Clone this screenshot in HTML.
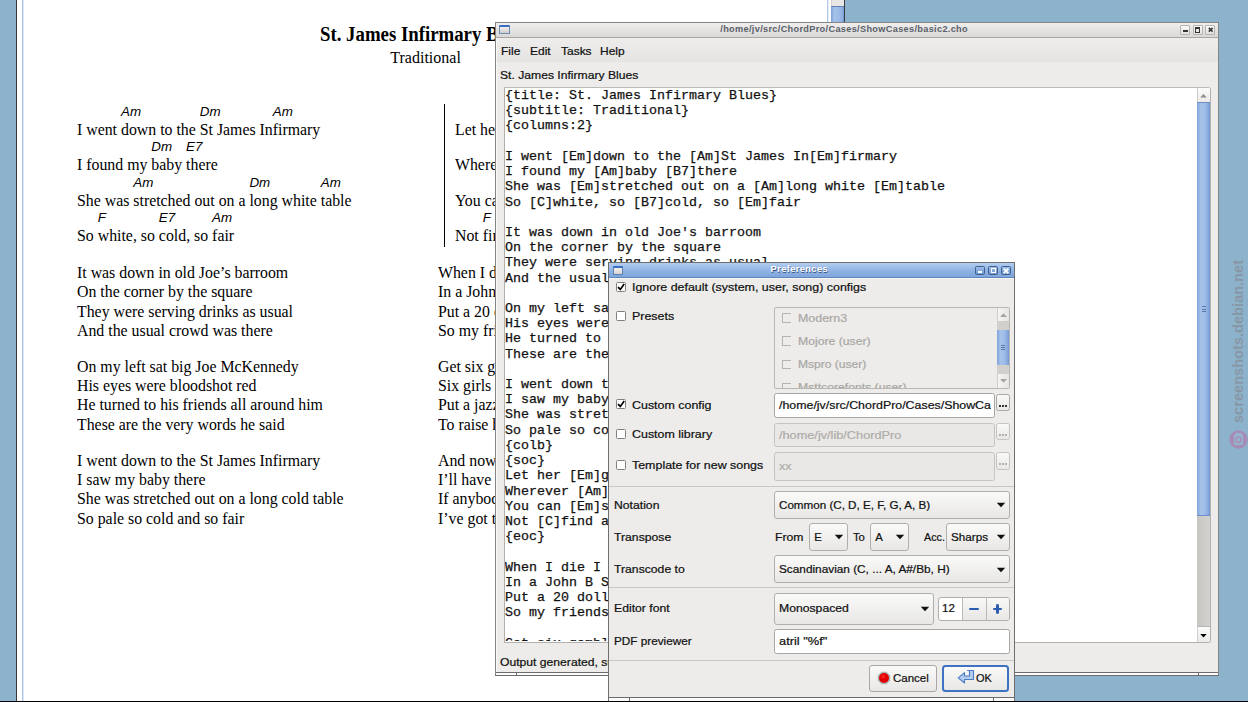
<!DOCTYPE html>
<html><head><meta charset="utf-8"><title>ChordPro</title>
<style>
html,body{margin:0;padding:0}
body{width:1248px;height:702px;overflow:hidden;position:relative;background:#8cb3cb;font-family:"Liberation Sans",sans-serif}
.t{position:absolute;white-space:pre}
.u{-webkit-text-stroke:0.22px currentColor}
.m{-webkit-text-stroke:0.25px currentColor}
.b{position:absolute}
.ch{position:relative}
.ch i{position:absolute;left:0;top:-16.9px;font-family:"Liberation Sans",sans-serif;font-size:13.5px;font-style:italic;line-height:16px;white-space:pre}
</style></head><body>
<div class="b" style="left:16px;top:0px;width:1px;height:701px;background:#3b3533"></div>
<div class="b" style="left:17px;top:0px;width:814px;height:701px;background:#fff"></div>
<div class="b" style="left:22px;top:0px;width:1px;height:701px;background:#adc5e8"></div>
<div class="b" style="left:23px;top:0px;width:1px;height:701px;background:#dce7f6"></div>
<div class="b" style="left:827px;top:0px;width:1px;height:701px;background:#b3c9ea"></div>
<div class="b" style="left:828px;top:0px;width:1px;height:701px;background:#e6eef9"></div>
<div class="b" style="left:831px;top:0px;width:13px;height:6px;background:#e8e6e3;box-sizing:border-box;border-left:1px solid #d6d3cf"></div>
<div class="b" style="left:831px;top:6px;width:13px;height:1px;background:#5f82bb"></div>
<div class="b" style="left:831px;top:7px;width:13px;height:694px;background:linear-gradient(90deg,#7aa0d8,#a6c2ea 25%,#9dbbe6 60%,#92b3e3 85%,#6f95d2)"></div>
<div class="b" style="left:844px;top:0px;width:1px;height:701px;background:#3a3d40"></div>
<div class="t " style="left:320px;top:21.75px;font-size:20px;line-height:24.0px;font-family:'Liberation Serif', serif;color:#000;font-weight:bold;font-style:normal;transform:scaleX(0.94);transform-origin:0 0;">St. James Infirmary Blues</div>
<div class="t " style="left:390.3px;top:47.60px;font-size:16px;line-height:19.2px;font-family:'Liberation Serif', serif;color:#000;font-weight:normal;font-style:normal;">Traditional</div>
<div class="t " style="left:77px;top:119.70px;font-size:16px;line-height:19.2px;font-family:'Liberation Serif', serif;color:#000;font-weight:normal;font-style:normal;transform:scaleX(0.99);transform-origin:0 0;">I went <span class="ch"><i>Am</i></span>down to the <span class="ch"><i>Dm</i></span>St James In<span class="ch"><i>Am</i></span>firmary</div>
<div class="t " style="left:77px;top:155.20px;font-size:16px;line-height:19.2px;font-family:'Liberation Serif', serif;color:#000;font-weight:normal;font-style:normal;transform:scaleX(0.99);transform-origin:0 0;">I found my <span class="ch"><i>Dm</i></span>baby <span class="ch"><i>E7</i></span>there</div>
<div class="t " style="left:77px;top:190.70px;font-size:16px;line-height:19.2px;font-family:'Liberation Serif', serif;color:#000;font-weight:normal;font-style:normal;transform:scaleX(0.99);transform-origin:0 0;">She was <span class="ch"><i>Am</i></span>stretched out on a <span class="ch"><i>Dm</i></span>long white <span class="ch"><i>Am</i></span>table</div>
<div class="t " style="left:77px;top:226.20px;font-size:16px;line-height:19.2px;font-family:'Liberation Serif', serif;color:#000;font-weight:normal;font-style:normal;transform:scaleX(0.99);transform-origin:0 0;">So <span class="ch"><i>F</i></span>white, so <span class="ch"><i>E7</i></span>cold, so <span class="ch"><i>Am</i></span>fair</div>
<div class="t " style="left:77px;top:262.70px;font-size:16px;line-height:19.2px;font-family:'Liberation Serif', serif;color:#000;font-weight:normal;font-style:normal;transform:scaleX(0.99);transform-origin:0 0;">It was down in old Joe’s barroom</div>
<div class="t " style="left:77px;top:282.10px;font-size:16px;line-height:19.2px;font-family:'Liberation Serif', serif;color:#000;font-weight:normal;font-style:normal;transform:scaleX(0.99);transform-origin:0 0;">On the corner by the square</div>
<div class="t " style="left:77px;top:301.50px;font-size:16px;line-height:19.2px;font-family:'Liberation Serif', serif;color:#000;font-weight:normal;font-style:normal;transform:scaleX(0.99);transform-origin:0 0;">They were serving drinks as usual</div>
<div class="t " style="left:77px;top:320.90px;font-size:16px;line-height:19.2px;font-family:'Liberation Serif', serif;color:#000;font-weight:normal;font-style:normal;transform:scaleX(0.99);transform-origin:0 0;">And the usual crowd was there</div>
<div class="t " style="left:77px;top:356.60px;font-size:16px;line-height:19.2px;font-family:'Liberation Serif', serif;color:#000;font-weight:normal;font-style:normal;transform:scaleX(0.99);transform-origin:0 0;">On my left sat big Joe McKennedy</div>
<div class="t " style="left:77px;top:376.00px;font-size:16px;line-height:19.2px;font-family:'Liberation Serif', serif;color:#000;font-weight:normal;font-style:normal;transform:scaleX(0.99);transform-origin:0 0;">His eyes were bloodshot red</div>
<div class="t " style="left:77px;top:395.40px;font-size:16px;line-height:19.2px;font-family:'Liberation Serif', serif;color:#000;font-weight:normal;font-style:normal;transform:scaleX(0.99);transform-origin:0 0;">He turned to his friends all around him</div>
<div class="t " style="left:77px;top:414.80px;font-size:16px;line-height:19.2px;font-family:'Liberation Serif', serif;color:#000;font-weight:normal;font-style:normal;transform:scaleX(0.99);transform-origin:0 0;">These are the very words he said</div>
<div class="t " style="left:77px;top:450.50px;font-size:16px;line-height:19.2px;font-family:'Liberation Serif', serif;color:#000;font-weight:normal;font-style:normal;transform:scaleX(0.99);transform-origin:0 0;">I went down to the St James Infirmary</div>
<div class="t " style="left:77px;top:469.90px;font-size:16px;line-height:19.2px;font-family:'Liberation Serif', serif;color:#000;font-weight:normal;font-style:normal;transform:scaleX(0.99);transform-origin:0 0;">I saw my baby there</div>
<div class="t " style="left:77px;top:489.30px;font-size:16px;line-height:19.2px;font-family:'Liberation Serif', serif;color:#000;font-weight:normal;font-style:normal;transform:scaleX(0.99);transform-origin:0 0;">She was stretched out on a long cold table</div>
<div class="t " style="left:77px;top:508.70px;font-size:16px;line-height:19.2px;font-family:'Liberation Serif', serif;color:#000;font-weight:normal;font-style:normal;transform:scaleX(0.99);transform-origin:0 0;">So pale so cold and so fair</div>
<div class="t " style="left:455.2px;top:119.70px;font-size:16px;line-height:19.2px;font-family:'Liberation Serif', serif;color:#000;font-weight:normal;font-style:normal;transform:scaleX(0.99);transform-origin:0 0;">Let her <span class="ch"><i>Am</i></span>go, let her go, God bless her</div>
<div class="t " style="left:455.2px;top:155.20px;font-size:16px;line-height:19.2px;font-family:'Liberation Serif', serif;color:#000;font-weight:normal;font-style:normal;transform:scaleX(0.99);transform-origin:0 0;">Wherever <span class="ch"><i>Dm</i></span>she may be</div>
<div class="t " style="left:455.2px;top:190.70px;font-size:16px;line-height:19.2px;font-family:'Liberation Serif', serif;color:#000;font-weight:normal;font-style:normal;transform:scaleX(0.99);transform-origin:0 0;">You can <span class="ch"><i>Am</i></span>search this wide world over</div>
<div class="t " style="left:455.2px;top:226.20px;font-size:16px;line-height:19.2px;font-family:'Liberation Serif', serif;color:#000;font-weight:normal;font-style:normal;transform:scaleX(0.99);transform-origin:0 0;">Not <span class="ch"><i>F</i></span>find another man like me</div>
<div class="b" style="left:444px;top:104px;width:1.3px;height:143px;background:#000"></div>
<div class="t " style="left:438.3px;top:262.70px;font-size:16px;line-height:19.2px;font-family:'Liberation Serif', serif;color:#000;font-weight:normal;font-style:normal;transform:scaleX(0.99);transform-origin:0 0;">When I die I want you to bury me</div>
<div class="t " style="left:438.3px;top:282.10px;font-size:16px;line-height:19.2px;font-family:'Liberation Serif', serif;color:#000;font-weight:normal;font-style:normal;transform:scaleX(0.99);transform-origin:0 0;">In a John B Stetson hat</div>
<div class="t " style="left:438.3px;top:301.50px;font-size:16px;line-height:19.2px;font-family:'Liberation Serif', serif;color:#000;font-weight:normal;font-style:normal;transform:scaleX(0.99);transform-origin:0 0;">Put a 20 dollar gold piece on my watch chain</div>
<div class="t " style="left:438.3px;top:320.90px;font-size:16px;line-height:19.2px;font-family:'Liberation Serif', serif;color:#000;font-weight:normal;font-style:normal;transform:scaleX(0.99);transform-origin:0 0;">So my friends know I died standing pat</div>
<div class="t " style="left:438.3px;top:356.60px;font-size:16px;line-height:19.2px;font-family:'Liberation Serif', serif;color:#000;font-weight:normal;font-style:normal;transform:scaleX(0.99);transform-origin:0 0;">Get six gamblers to carry my coffin</div>
<div class="t " style="left:438.3px;top:376.00px;font-size:16px;line-height:19.2px;font-family:'Liberation Serif', serif;color:#000;font-weight:normal;font-style:normal;transform:scaleX(0.99);transform-origin:0 0;">Six girls to sing me a song</div>
<div class="t " style="left:438.3px;top:395.40px;font-size:16px;line-height:19.2px;font-family:'Liberation Serif', serif;color:#000;font-weight:normal;font-style:normal;transform:scaleX(0.99);transform-origin:0 0;">Put a jazz band on my tail gate</div>
<div class="t " style="left:438.3px;top:414.80px;font-size:16px;line-height:19.2px;font-family:'Liberation Serif', serif;color:#000;font-weight:normal;font-style:normal;transform:scaleX(0.99);transform-origin:0 0;">To raise hell as we go along</div>
<div class="t " style="left:438.3px;top:450.50px;font-size:16px;line-height:19.2px;font-family:'Liberation Serif', serif;color:#000;font-weight:normal;font-style:normal;transform:scaleX(0.99);transform-origin:0 0;">And now that’s the end of my story</div>
<div class="t " style="left:438.3px;top:469.90px;font-size:16px;line-height:19.2px;font-family:'Liberation Serif', serif;color:#000;font-weight:normal;font-style:normal;transform:scaleX(0.99);transform-origin:0 0;">I’ll have another round of booze</div>
<div class="t " style="left:438.3px;top:489.30px;font-size:16px;line-height:19.2px;font-family:'Liberation Serif', serif;color:#000;font-weight:normal;font-style:normal;transform:scaleX(0.99);transform-origin:0 0;">If anybody happens to ask you</div>
<div class="t " style="left:438.3px;top:508.70px;font-size:16px;line-height:19.2px;font-family:'Liberation Serif', serif;color:#000;font-weight:normal;font-style:normal;transform:scaleX(0.99);transform-origin:0 0;">I’ve got the St James Infirmary blues</div>
<div class="b" style="left:495px;top:22px;width:724px;height:654px;background:#edecea;box-sizing:border-box;border:1px solid #858585;overflow:hidden"></div>
<div class="b" style="left:496px;top:23px;width:722px;height:14px;background:linear-gradient(#f0efee,#d9d8d6)"></div>
<div class="b" style="left:496px;top:37px;width:722px;height:1px;background:#a8a7a5"></div>
<div class="b" style="left:499.3px;top:25.3px;width:10.7px;height:9.2px;background:linear-gradient(#f4f1ee,#d0cdc9);box-sizing:border-box;border:1px solid #6f8bb5;border-top:2px solid #3a6cc0;border-radius:1px"></div>
<div class="t " style="left:720.3px;top:23.89px;font-size:9.2px;line-height:11.04px;font-family:'Liberation Sans', sans-serif;color:#5a606a;font-weight:bold;font-style:normal;letter-spacing:0.32px;">/home/jv/src/ChordPro/Cases/ShowCases/basic2.cho</div>
<div class="b" style="left:1180px;top:25px;width:10px;height:10px;box-sizing:border-box;border:1px solid #b4b3b0;border-radius:1px;background:linear-gradient(#fbfbfa,#e2e1df)"></div>
<div class="b" style="left:1192.5px;top:25px;width:10px;height:10px;box-sizing:border-box;border:1px solid #b4b3b0;border-radius:1px;background:linear-gradient(#fbfbfa,#e2e1df)"></div>
<div class="b" style="left:1205px;top:25px;width:10px;height:10px;box-sizing:border-box;border:1px solid #b4b3b0;border-radius:1px;background:linear-gradient(#fbfbfa,#e2e1df)"></div>
<div class="b" style="left:1182.5px;top:30.2px;width:5px;height:1.5px;background:#333"></div>
<div class="b" style="left:1194.7px;top:27px;width:5.7px;height:5.5px;box-sizing:border-box;border:1px solid #333;border-top-width:2px"></div>
<svg class="b" style="left:1207.6px;top:27.2px" width="6" height="6"><path d="M0.8 0.8L4.6 4.6M4.6 0.8L0.8 4.6" stroke="#3c3c3c" stroke-width="1.7"/></svg>
<div class="b" style="left:496px;top:38px;width:722px;height:24px;background:linear-gradient(#eeedeb,#e5e4e2)"></div>
<div class="b" style="left:496px;top:38px;width:1px;height:634px;background:#f9f9f8"></div>
<div class="t u" style="left:501.4px;top:44.50px;font-size:11.3px;line-height:13.56px;font-family:'Liberation Sans', sans-serif;color:#111;font-weight:normal;font-style:normal;transform:scaleX(1.06);transform-origin:0 0;">File</div>
<div class="t u" style="left:530.4px;top:44.50px;font-size:11.3px;line-height:13.56px;font-family:'Liberation Sans', sans-serif;color:#111;font-weight:normal;font-style:normal;transform:scaleX(1.06);transform-origin:0 0;">Edit</div>
<div class="t u" style="left:560.9px;top:44.50px;font-size:11.3px;line-height:13.56px;font-family:'Liberation Sans', sans-serif;color:#111;font-weight:normal;font-style:normal;transform:scaleX(1.06);transform-origin:0 0;">Tasks</div>
<div class="t u" style="left:600.0px;top:44.50px;font-size:11.3px;line-height:13.56px;font-family:'Liberation Sans', sans-serif;color:#111;font-weight:normal;font-style:normal;transform:scaleX(1.06);transform-origin:0 0;">Help</div>
<div class="t u" style="left:499.8px;top:68.50px;font-size:11.3px;line-height:13.56px;font-family:'Liberation Sans', sans-serif;color:#111;font-weight:normal;font-style:normal;transform:scaleX(1.075);transform-origin:0 0;">St. James Infirmary Blues</div>
<div class="b" style="left:504px;top:87px;width:707px;height:556px;background:#fff;box-sizing:border-box;border:1px solid #b2b0ad;border-top-color:#bdbbb8;border-radius:0 3px 3px 0"></div>
<div class="b" style="left:505px;top:88px;width:691px;height:553px;overflow:hidden"><div class="t m" style="left:0.0px;top:0.05px;font-size:13.33px;line-height:15.996px;font-family:'Liberation Mono', monospace;color:#111;font-weight:normal;font-style:normal;">{title: St. James Infirmary Blues}</div><div class="t m" style="left:0.0px;top:15.26px;font-size:13.33px;line-height:15.996px;font-family:'Liberation Mono', monospace;color:#111;font-weight:normal;font-style:normal;">{subtitle: Traditional}</div><div class="t m" style="left:0.0px;top:30.47px;font-size:13.33px;line-height:15.996px;font-family:'Liberation Mono', monospace;color:#111;font-weight:normal;font-style:normal;">{columns:2}</div><div class="t m" style="left:0.0px;top:45.68px;font-size:13.33px;line-height:15.996px;font-family:'Liberation Mono', monospace;color:#111;font-weight:normal;font-style:normal;"></div><div class="t m" style="left:0.0px;top:60.89px;font-size:13.33px;line-height:15.996px;font-family:'Liberation Mono', monospace;color:#111;font-weight:normal;font-style:normal;">I went [Em]down to the [Am]St James In[Em]firmary</div><div class="t m" style="left:0.0px;top:76.10px;font-size:13.33px;line-height:15.996px;font-family:'Liberation Mono', monospace;color:#111;font-weight:normal;font-style:normal;">I found my [Am]baby [B7]there</div><div class="t m" style="left:0.0px;top:91.31px;font-size:13.33px;line-height:15.996px;font-family:'Liberation Mono', monospace;color:#111;font-weight:normal;font-style:normal;">She was [Em]stretched out on a [Am]long white [Em]table</div><div class="t m" style="left:0.0px;top:106.52px;font-size:13.33px;line-height:15.996px;font-family:'Liberation Mono', monospace;color:#111;font-weight:normal;font-style:normal;">So [C]white, so [B7]cold, so [Em]fair</div><div class="t m" style="left:0.0px;top:121.73px;font-size:13.33px;line-height:15.996px;font-family:'Liberation Mono', monospace;color:#111;font-weight:normal;font-style:normal;"></div><div class="t m" style="left:0.0px;top:136.94px;font-size:13.33px;line-height:15.996px;font-family:'Liberation Mono', monospace;color:#111;font-weight:normal;font-style:normal;">It was down in old Joe&#x27;s barroom</div><div class="t m" style="left:0.0px;top:152.15px;font-size:13.33px;line-height:15.996px;font-family:'Liberation Mono', monospace;color:#111;font-weight:normal;font-style:normal;">On the corner by the square</div><div class="t m" style="left:0.0px;top:167.36px;font-size:13.33px;line-height:15.996px;font-family:'Liberation Mono', monospace;color:#111;font-weight:normal;font-style:normal;">They were serving drinks as usual</div><div class="t m" style="left:0.0px;top:182.57px;font-size:13.33px;line-height:15.996px;font-family:'Liberation Mono', monospace;color:#111;font-weight:normal;font-style:normal;">And the usual crowd was there</div><div class="t m" style="left:0.0px;top:197.78px;font-size:13.33px;line-height:15.996px;font-family:'Liberation Mono', monospace;color:#111;font-weight:normal;font-style:normal;"></div><div class="t m" style="left:0.0px;top:212.99px;font-size:13.33px;line-height:15.996px;font-family:'Liberation Mono', monospace;color:#111;font-weight:normal;font-style:normal;">On my left sat big Joe McKennedy</div><div class="t m" style="left:0.0px;top:228.20px;font-size:13.33px;line-height:15.996px;font-family:'Liberation Mono', monospace;color:#111;font-weight:normal;font-style:normal;">His eyes were bloodshot red</div><div class="t m" style="left:0.0px;top:243.41px;font-size:13.33px;line-height:15.996px;font-family:'Liberation Mono', monospace;color:#111;font-weight:normal;font-style:normal;">He turned to his friends all around him</div><div class="t m" style="left:0.0px;top:258.62px;font-size:13.33px;line-height:15.996px;font-family:'Liberation Mono', monospace;color:#111;font-weight:normal;font-style:normal;">These are the very words he said</div><div class="t m" style="left:0.0px;top:273.83px;font-size:13.33px;line-height:15.996px;font-family:'Liberation Mono', monospace;color:#111;font-weight:normal;font-style:normal;"></div><div class="t m" style="left:0.0px;top:289.04px;font-size:13.33px;line-height:15.996px;font-family:'Liberation Mono', monospace;color:#111;font-weight:normal;font-style:normal;">I went down to the St James Infirmary</div><div class="t m" style="left:0.0px;top:304.25px;font-size:13.33px;line-height:15.996px;font-family:'Liberation Mono', monospace;color:#111;font-weight:normal;font-style:normal;">I saw my baby there</div><div class="t m" style="left:0.0px;top:319.46px;font-size:13.33px;line-height:15.996px;font-family:'Liberation Mono', monospace;color:#111;font-weight:normal;font-style:normal;">She was stretched out on a long cold table</div><div class="t m" style="left:0.0px;top:334.67px;font-size:13.33px;line-height:15.996px;font-family:'Liberation Mono', monospace;color:#111;font-weight:normal;font-style:normal;">So pale so cold and so fair</div><div class="t m" style="left:0.0px;top:349.88px;font-size:13.33px;line-height:15.996px;font-family:'Liberation Mono', monospace;color:#111;font-weight:normal;font-style:normal;">{colb}</div><div class="t m" style="left:0.0px;top:365.09px;font-size:13.33px;line-height:15.996px;font-family:'Liberation Mono', monospace;color:#111;font-weight:normal;font-style:normal;">{soc}</div><div class="t m" style="left:0.0px;top:380.30px;font-size:13.33px;line-height:15.996px;font-family:'Liberation Mono', monospace;color:#111;font-weight:normal;font-style:normal;">Let her [Em]go, let her go, God bless her</div><div class="t m" style="left:0.0px;top:395.51px;font-size:13.33px;line-height:15.996px;font-family:'Liberation Mono', monospace;color:#111;font-weight:normal;font-style:normal;">Wherever [Am]she may be</div><div class="t m" style="left:0.0px;top:410.72px;font-size:13.33px;line-height:15.996px;font-family:'Liberation Mono', monospace;color:#111;font-weight:normal;font-style:normal;">You can [Em]search this wide world over</div><div class="t m" style="left:0.0px;top:425.93px;font-size:13.33px;line-height:15.996px;font-family:'Liberation Mono', monospace;color:#111;font-weight:normal;font-style:normal;">Not [C]find another man like me</div><div class="t m" style="left:0.0px;top:441.14px;font-size:13.33px;line-height:15.996px;font-family:'Liberation Mono', monospace;color:#111;font-weight:normal;font-style:normal;">{eoc}</div><div class="t m" style="left:0.0px;top:456.35px;font-size:13.33px;line-height:15.996px;font-family:'Liberation Mono', monospace;color:#111;font-weight:normal;font-style:normal;"></div><div class="t m" style="left:0.0px;top:471.56px;font-size:13.33px;line-height:15.996px;font-family:'Liberation Mono', monospace;color:#111;font-weight:normal;font-style:normal;">When I die I want you to bury me</div><div class="t m" style="left:0.0px;top:486.77px;font-size:13.33px;line-height:15.996px;font-family:'Liberation Mono', monospace;color:#111;font-weight:normal;font-style:normal;">In a John B Stetson hat</div><div class="t m" style="left:0.0px;top:501.98px;font-size:13.33px;line-height:15.996px;font-family:'Liberation Mono', monospace;color:#111;font-weight:normal;font-style:normal;">Put a 20 dollar gold piece on my watch chain</div><div class="t m" style="left:0.0px;top:517.19px;font-size:13.33px;line-height:15.996px;font-family:'Liberation Mono', monospace;color:#111;font-weight:normal;font-style:normal;">So my friends know I died standing pat</div><div class="t m" style="left:0.0px;top:532.40px;font-size:13.33px;line-height:15.996px;font-family:'Liberation Mono', monospace;color:#111;font-weight:normal;font-style:normal;"></div><div class="t m" style="left:0.0px;top:547.61px;font-size:13.33px;line-height:15.996px;font-family:'Liberation Mono', monospace;color:#111;font-weight:normal;font-style:normal;">Get six gamblers to carry my coffin</div></div>
<div class="b" style="left:1197px;top:88px;width:13px;height:14px;background:linear-gradient(#fbfbfa,#ecebe9);box-sizing:border-box;border-left:1px solid #cfcecc;border-radius:0 2px 0 0"></div>
<svg class="b" style="left:1199.3px;top:92.5px" width="9" height="6"><path d="M1.3 4.6L7.7 4.6L4.5 1Z" fill="#8f8c89"/></svg>
<div class="b" style="left:1197px;top:102px;width:13px;height:414px;background:linear-gradient(90deg,#7ea3da,#a8c3ea 30%,#a0bde8 60%,#88aade 85%,#6f97d4);box-sizing:border-box;border-top:1px solid #6d8fc8;border-bottom:1px solid #6d8fc8"></div>
<div class="b" style="left:1201.5px;top:306px;width:4px;height:1px;background:#5a78a8"></div>
<div class="b" style="left:1201.5px;top:308.7px;width:4px;height:1px;background:#5a78a8"></div>
<div class="b" style="left:1201.5px;top:311.2px;width:4px;height:1px;background:#5a78a8"></div>
<div class="b" style="left:1197px;top:516px;width:13px;height:110px;background:linear-gradient(90deg,#c7c6c3,#d3d2cf)"></div>
<div class="b" style="left:1197px;top:626px;width:13px;height:16px;background:linear-gradient(#fbfbfa,#ecebe9);box-sizing:border-box;border-left:1px solid #cfcecc;border-top:1px solid #b9b7b4;border-radius:0 0 2px 0"></div>
<svg class="b" style="left:1199.3px;top:632.5px" width="9" height="6"><path d="M1.3 1L7.7 1L4.5 4.6Z" fill="#000"/></svg>
<div class="t u" style="left:499.8px;top:656.10px;font-size:11.3px;line-height:13.56px;font-family:'Liberation Sans', sans-serif;color:#111;font-weight:normal;font-style:normal;transform:scaleX(1.075);transform-origin:0 0;">Output generated, successfully</div>
<div class="b" style="left:496px;top:672px;width:722px;height:1px;background:#6c6c6c"></div>
<div class="b" style="left:496px;top:673px;width:722px;height:2px;background:#fbfbfb"></div>
<div class="b" style="left:495px;top:675px;width:724px;height:1px;background:#6c6c6c"></div>
<div class="b" style="left:516px;top:672px;width:1px;height:4px;background:#6c6c6c"></div>
<div class="b" style="left:1197.5px;top:672px;width:1px;height:4px;background:#6c6c6c"></div>
<div class="b" style="left:608px;top:262px;width:407px;height:439px;background:#edecea;box-sizing:border-box;border:1px solid #6e6e6e;border-bottom:none"></div>
<div class="b" style="left:609px;top:263px;width:405px;height:15px;background:linear-gradient(#b3cdf0,#8db1e2 55%,#7ea4d8)"></div>
<div class="b" style="left:609px;top:277px;width:405px;height:1px;background:#5e86c0"></div>
<div class="b" style="left:612.8px;top:265.8px;width:10.5px;height:9.2px;background:linear-gradient(#f4f1ee,#d6d3cf);box-sizing:border-box;border:1px solid #5b7fb5;border-top:2px solid #3a6cc0;border-radius:1px"></div>
<div class="t " style="left:770.6px;top:264.30px;font-size:9.3px;line-height:11.16px;font-family:'Liberation Sans', sans-serif;color:#ffffff;font-weight:bold;font-style:normal;letter-spacing:0.38px;text-shadow:0.6px 0.7px 0.6px rgba(30,50,90,0.75);">Preferences</div>
<div class="b" style="left:975px;top:265.5px;width:10px;height:9.5px;box-sizing:border-box;border:1px solid #3f5f8e;border-radius:1.5px;background:linear-gradient(#9cbde9,#6e98d2)"></div>
<div class="b" style="left:988px;top:265.5px;width:10px;height:9.5px;box-sizing:border-box;border:1px solid #3f5f8e;border-radius:1.5px;background:linear-gradient(#9cbde9,#6e98d2)"></div>
<div class="b" style="left:1001px;top:265.5px;width:10px;height:9.5px;box-sizing:border-box;border:1px solid #3f5f8e;border-radius:1.5px;background:linear-gradient(#9cbde9,#6e98d2)"></div>
<div class="b" style="left:977.8px;top:271px;width:4.6px;height:1.8px;background:#fff"></div>
<div class="b" style="left:990.6px;top:268px;width:5px;height:4.8px;box-sizing:border-box;border:1.4px solid #fff"></div>
<svg class="b" style="left:1003.3px;top:267.6px" width="6" height="6"><path d="M0.7 0.7L5.3 5.3M5.3 0.7L0.7 5.3" stroke="#fff" stroke-width="1.7"/></svg>
<div class="b" style="left:609px;top:278px;width:405px;height:1px;background:#f8f4ef"></div>
<div class="b" style="left:616px;top:282px;width:10px;height:10px;box-sizing:border-box;border:1px solid #82807d;border-radius:1.5px;background:#fff"></div><svg class="b" style="left:616px;top:282px" width="10" height="10"><path d="M2 5.1L4.3 7.4L8.2 2.1" stroke="#000" stroke-width="1.7" fill="none"/></svg>
<div class="t u" style="left:632.3px;top:281.30px;font-size:11.3px;line-height:13.56px;font-family:'Liberation Sans', sans-serif;color:#111;font-weight:normal;font-style:normal;transform:scaleX(1.1);transform-origin:0 0;">Ignore default (system, user, song) configs</div>
<div class="b" style="left:616px;top:311px;width:10px;height:10px;box-sizing:border-box;border:1px solid #82807d;border-radius:1.5px;background:#fff"></div>
<div class="t u" style="left:632.3px;top:310.10px;font-size:11.3px;line-height:13.56px;font-family:'Liberation Sans', sans-serif;color:#111;font-weight:normal;font-style:normal;transform:scaleX(1.1);transform-origin:0 0;">Presets</div>
<div class="b" style="left:774px;top:307px;width:236px;height:82px;box-sizing:border-box;border:1px solid #b9b7b4;border-radius:2px;background:#edecea"></div>
<div class="b" style="left:775px;top:308px;width:222px;height:80px;overflow:hidden"><div class="b" style="left:7px;top:5.0px;width:9px;height:9.5px;box-sizing:border-box;border:1px solid #b6b4b1;border-right:none;"></div><div class="t u" style="left:22.6px;top:3.50px;font-size:11.3px;line-height:13.56px;font-family:'Liberation Sans', sans-serif;color:#a9a7a4;font-weight:normal;font-style:normal;transform:scaleX(1.1);transform-origin:0 0;">Modern3</div><div class="b" style="left:7px;top:28.3px;width:9px;height:9.5px;box-sizing:border-box;border:1px solid #b6b4b1;border-right:none;"></div><div class="t u" style="left:22.6px;top:26.80px;font-size:11.3px;line-height:13.56px;font-family:'Liberation Sans', sans-serif;color:#a9a7a4;font-weight:normal;font-style:normal;transform:scaleX(1.08);transform-origin:0 0;">Mojore (user)</div><div class="b" style="left:7px;top:51.6px;width:9px;height:9.5px;box-sizing:border-box;border:1px solid #b6b4b1;border-right:none;"></div><div class="t u" style="left:22.6px;top:50.10px;font-size:11.3px;line-height:13.56px;font-family:'Liberation Sans', sans-serif;color:#a9a7a4;font-weight:normal;font-style:normal;transform:scaleX(1.066);transform-origin:0 0;">Mspro (user)</div><div class="b" style="left:7px;top:74.9px;width:9px;height:9.5px;box-sizing:border-box;border:1px solid #b6b4b1;border-right:none;"></div><div class="t u" style="left:22.6px;top:73.40px;font-size:11.3px;line-height:13.56px;font-family:'Liberation Sans', sans-serif;color:#a9a7a4;font-weight:normal;font-style:normal;transform:scaleX(1.08);transform-origin:0 0;">Msttcorefonts (user)</div></div>
<div class="b" style="left:997px;top:308px;width:12px;height:14px;background:linear-gradient(90deg,#f6f5f3,#e6e5e3);box-sizing:border-box;border-left:1px solid #d0cfcc;border-bottom:1px solid #d0cfcc"></div>
<svg class="b" style="left:999px;top:312px" width="9" height="6"><path d="M1 5L4.5 1.2L8 5Z" fill="#a5a5a5"/></svg>
<div class="b" style="left:997px;top:322px;width:12px;height:8px;background:#d2d0cd"></div>
<div class="b" style="left:997px;top:330px;width:12px;height:35px;background:linear-gradient(90deg,#7ea3da,#a8c3ea 30%,#a0bde8 60%,#88aade 85%,#6f97d4)"></div>
<div class="b" style="left:1001px;top:344.5px;width:4px;height:0.9px;background:#5a78a8"></div>
<div class="b" style="left:1001px;top:346.8px;width:4px;height:0.9px;background:#5a78a8"></div>
<div class="b" style="left:1001px;top:349px;width:4px;height:0.9px;background:#5a78a8"></div>
<div class="b" style="left:997px;top:365px;width:12px;height:8px;background:#d2d0cd"></div>
<div class="b" style="left:997px;top:373px;width:12px;height:15px;background:linear-gradient(90deg,#f6f5f3,#e6e5e3);box-sizing:border-box;border-left:1px solid #d0cfcc;border-top:1px solid #d0cfcc"></div>
<svg class="b" style="left:999px;top:378px" width="9" height="6"><path d="M1 1L4.5 4.8L8 1Z" fill="#a5a5a5"/></svg>
<div class="b" style="left:616px;top:399px;width:10px;height:10px;box-sizing:border-box;border:1px solid #82807d;border-radius:1.5px;background:#fff"></div><svg class="b" style="left:616px;top:399px" width="10" height="10"><path d="M2 5.1L4.3 7.4L8.2 2.1" stroke="#000" stroke-width="1.7" fill="none"/></svg>
<div class="t u" style="left:632.3px;top:398.60px;font-size:11.3px;line-height:13.56px;font-family:'Liberation Sans', sans-serif;color:#111;font-weight:normal;font-style:normal;transform:scaleX(1.1);transform-origin:0 0;">Custom config</div>
<div class="b" style="left:774px;top:393px;width:221px;height:25px;box-sizing:border-box;border:1px solid #a9a7a4;border-radius:2.5px;background:#fff"></div><div class="b" style="left:775px;top:394px;width:216px;height:23px;overflow:hidden"><div class="t u" style="left:3.5px;top:4.90px;font-size:11.3px;line-height:13.56px;font-family:'Liberation Sans', sans-serif;color:#111;font-weight:normal;font-style:normal;transform:scaleX(1.096);transform-origin:0 0;">/home/jv/src/ChordPro/Cases/ShowCases/basic2.prp</div></div>
<div class="b" style="left:996px;top:394px;width:14px;height:17px;box-sizing:border-box;border:1px solid #aaa8a5;border-radius:2.5px;background:linear-gradient(#f9f9f8,#e9e8e6)"></div><div class="b" style="left:999.3px;top:405px;width:1.6px;height:1.6px;background:#333"></div><div class="b" style="left:1002.1999999999999px;top:405px;width:1.6px;height:1.6px;background:#333"></div><div class="b" style="left:1005.0999999999999px;top:405px;width:1.6px;height:1.6px;background:#333"></div>
<div class="b" style="left:616px;top:429px;width:10px;height:10px;box-sizing:border-box;border:1px solid #82807d;border-radius:1.5px;background:#fff"></div>
<div class="t u" style="left:632.3px;top:428.30px;font-size:11.3px;line-height:13.56px;font-family:'Liberation Sans', sans-serif;color:#111;font-weight:normal;font-style:normal;transform:scaleX(1.1);transform-origin:0 0;">Custom library</div>
<div class="b" style="left:774px;top:423px;width:221px;height:24px;box-sizing:border-box;border:1px solid #c6c4c1;border-radius:2.5px;background:#e9e8e6"></div><div class="b" style="left:775px;top:424px;width:216px;height:22px;overflow:hidden"><div class="t u" style="left:3.5px;top:4.50px;font-size:11.3px;line-height:13.56px;font-family:'Liberation Sans', sans-serif;color:#aeaca9;font-weight:normal;font-style:normal;transform:scaleX(1.126);transform-origin:0 0;">/home/jv/lib/ChordPro</div></div>
<div class="b" style="left:996px;top:423px;width:14px;height:17px;box-sizing:border-box;border:1px solid #c6c4c1;border-radius:2.5px;background:linear-gradient(#f9f9f8,#e9e8e6)"></div><div class="b" style="left:999.3px;top:434px;width:1.6px;height:1.6px;background:#b3b1ae"></div><div class="b" style="left:1002.1999999999999px;top:434px;width:1.6px;height:1.6px;background:#b3b1ae"></div><div class="b" style="left:1005.0999999999999px;top:434px;width:1.6px;height:1.6px;background:#b3b1ae"></div>
<div class="b" style="left:616px;top:460px;width:10px;height:10px;box-sizing:border-box;border:1px solid #82807d;border-radius:1.5px;background:#fff"></div>
<div class="t u" style="left:632.3px;top:459.20px;font-size:11.3px;line-height:13.56px;font-family:'Liberation Sans', sans-serif;color:#111;font-weight:normal;font-style:normal;transform:scaleX(1.1);transform-origin:0 0;">Template for new songs</div>
<div class="b" style="left:774px;top:452px;width:221px;height:28.5px;box-sizing:border-box;border:1px solid #c6c4c1;border-radius:2.5px;background:#e9e8e6"></div><div class="b" style="left:775px;top:453px;width:216px;height:26.5px;overflow:hidden"><div class="t u" style="left:3.5px;top:6.80px;font-size:11.3px;line-height:13.56px;font-family:'Liberation Sans', sans-serif;color:#aeaca9;font-weight:normal;font-style:normal;transform:scaleX(1.1);transform-origin:0 0;">xx</div></div>
<div class="b" style="left:996px;top:452px;width:14px;height:18px;box-sizing:border-box;border:1px solid #c6c4c1;border-radius:2.5px;background:linear-gradient(#f9f9f8,#e9e8e6)"></div><div class="b" style="left:999.3px;top:463px;width:1.6px;height:1.6px;background:#b3b1ae"></div><div class="b" style="left:1002.1999999999999px;top:463px;width:1.6px;height:1.6px;background:#b3b1ae"></div><div class="b" style="left:1005.0999999999999px;top:463px;width:1.6px;height:1.6px;background:#b3b1ae"></div>
<div class="b" style="left:609px;top:485.5px;width:405px;height:1px;background:#cac8c5"></div>
<div class="t u" style="left:613.6px;top:499.10px;font-size:11.3px;line-height:13.56px;font-family:'Liberation Sans', sans-serif;color:#111;font-weight:normal;font-style:normal;transform:scaleX(1.08);transform-origin:0 0;">Notation</div>
<div class="b" style="left:774px;top:491px;width:236px;height:27.5px;box-sizing:border-box;border:1px solid #b1afac;border-radius:3px;background:linear-gradient(#fafaf9,#e8e7e5)"></div><div class="t u" style="left:779.3px;top:499.10px;font-size:11.3px;line-height:13.56px;font-family:'Liberation Sans', sans-serif;color:#111;font-weight:normal;font-style:normal;transform:scaleX(1.029);transform-origin:0 0;">Common (C, D, E, F, G, A, B)</div><svg class="b" style="left:995.5px;top:502.45px" width="10" height="6"><path d="M0.8 0.8L9.2 0.8L5 5.2Z" fill="#111"/></svg>
<div class="t u" style="left:613.6px;top:530.80px;font-size:11.3px;line-height:13.56px;font-family:'Liberation Sans', sans-serif;color:#111;font-weight:normal;font-style:normal;transform:scaleX(1.08);transform-origin:0 0;">Transpose</div>
<div class="t u" style="left:774.8px;top:530.80px;font-size:11.3px;line-height:13.56px;font-family:'Liberation Sans', sans-serif;color:#111;font-weight:normal;font-style:normal;transform:scaleX(1.08);transform-origin:0 0;">From</div>
<div class="b" style="left:809px;top:523px;width:39px;height:27.5px;box-sizing:border-box;border:1px solid #b1afac;border-radius:3px;background:linear-gradient(#fafaf9,#e8e7e5)"></div><div class="t u" style="left:814.3px;top:530.80px;font-size:11.3px;line-height:13.56px;font-family:'Liberation Sans', sans-serif;color:#111;font-weight:normal;font-style:normal;transform:scaleX(1.0);transform-origin:0 0;">E</div><svg class="b" style="left:833.5px;top:534.45px" width="10" height="6"><path d="M0.8 0.8L9.2 0.8L5 5.2Z" fill="#111"/></svg>
<div class="t u" style="left:852.9px;top:530.80px;font-size:11.3px;line-height:13.56px;font-family:'Liberation Sans', sans-serif;color:#111;font-weight:normal;font-style:normal;transform:scaleX(1.0);transform-origin:0 0;">To</div>
<div class="b" style="left:870px;top:523px;width:39px;height:27.5px;box-sizing:border-box;border:1px solid #b1afac;border-radius:3px;background:linear-gradient(#fafaf9,#e8e7e5)"></div><div class="t u" style="left:875.3px;top:530.80px;font-size:11.3px;line-height:13.56px;font-family:'Liberation Sans', sans-serif;color:#111;font-weight:normal;font-style:normal;transform:scaleX(1.0);transform-origin:0 0;">A</div><svg class="b" style="left:894.5px;top:534.45px" width="10" height="6"><path d="M0.8 0.8L9.2 0.8L5 5.2Z" fill="#111"/></svg>
<div class="t u" style="left:924px;top:530.80px;font-size:11.3px;line-height:13.56px;font-family:'Liberation Sans', sans-serif;color:#111;font-weight:normal;font-style:normal;transform:scaleX(0.95);transform-origin:0 0;">Acc.</div>
<div class="b" style="left:946px;top:523px;width:64px;height:27.5px;box-sizing:border-box;border:1px solid #b1afac;border-radius:3px;background:linear-gradient(#fafaf9,#e8e7e5)"></div><div class="t u" style="left:951px;top:530.80px;font-size:11.3px;line-height:13.56px;font-family:'Liberation Sans', sans-serif;color:#111;font-weight:normal;font-style:normal;transform:scaleX(1.033);transform-origin:0 0;">Sharps</div><svg class="b" style="left:995.5px;top:534.45px" width="10" height="6"><path d="M0.8 0.8L9.2 0.8L5 5.2Z" fill="#111"/></svg>
<div class="t u" style="left:613.6px;top:563.10px;font-size:11.3px;line-height:13.56px;font-family:'Liberation Sans', sans-serif;color:#111;font-weight:normal;font-style:normal;transform:scaleX(1.08);transform-origin:0 0;">Transcode to</div>
<div class="b" style="left:774px;top:555px;width:236px;height:28px;box-sizing:border-box;border:1px solid #b1afac;border-radius:3px;background:linear-gradient(#fafaf9,#e8e7e5)"></div><div class="t u" style="left:779.3px;top:563.10px;font-size:11.3px;line-height:13.56px;font-family:'Liberation Sans', sans-serif;color:#111;font-weight:normal;font-style:normal;transform:scaleX(1.045);transform-origin:0 0;">Scandinavian (C, ... A, A#/Bb, H)</div><svg class="b" style="left:995.5px;top:566.7px" width="10" height="6"><path d="M0.8 0.8L9.2 0.8L5 5.2Z" fill="#111"/></svg>
<div class="b" style="left:609px;top:587px;width:405px;height:1px;background:#cac8c5"></div>
<div class="t u" style="left:613.6px;top:602.10px;font-size:11.3px;line-height:13.56px;font-family:'Liberation Sans', sans-serif;color:#111;font-weight:normal;font-style:normal;transform:scaleX(1.08);transform-origin:0 0;">Editor font</div>
<div class="b" style="left:774px;top:593px;width:160px;height:31.5px;box-sizing:border-box;border:1px solid #b1afac;border-radius:3px;background:linear-gradient(#fafaf9,#e8e7e5)"></div><div class="t u" style="left:779.3px;top:602.20px;font-size:11.3px;line-height:13.56px;font-family:'Liberation Sans', sans-serif;color:#111;font-weight:normal;font-style:normal;transform:scaleX(1.08);transform-origin:0 0;">Monospaced</div><svg class="b" style="left:919.5px;top:606.45px" width="10" height="6"><path d="M0.8 0.8L9.2 0.8L5 5.2Z" fill="#111"/></svg>
<div class="b" style="left:938px;top:597px;width:72px;height:24px;box-sizing:border-box;border:1px solid #b1afac;border-radius:3px;background:#fff;overflow:hidden"></div>
<div class="b" style="left:962.5px;top:598px;width:46.5px;height:22px;background:linear-gradient(#f8f8f7,#e8e7e5);border-radius:0 2px 2px 0"></div>
<div class="b" style="left:962px;top:598px;width:1px;height:22px;background:#bdbbb8"></div>
<div class="b" style="left:985.5px;top:598px;width:1px;height:22px;background:#bdbbb8"></div>
<div class="t u" style="left:941.8px;top:602.30px;font-size:11.3px;line-height:13.56px;font-family:'Liberation Sans', sans-serif;color:#111;font-weight:normal;font-style:normal;transform:scaleX(1.02);transform-origin:0 0;">12</div>
<div class="b" style="left:969.3px;top:607.6px;width:9.7px;height:2.9px;background:#2a5db0;border-radius:1.4px"></div>
<div class="b" style="left:992.7px;top:607.6px;width:9.5px;height:2.9px;background:#2a5db0;border-radius:1.4px"></div>
<div class="b" style="left:996px;top:604px;width:2.9px;height:9.8px;background:#2a5db0;border-radius:1.4px"></div>
<div class="t u" style="left:613.6px;top:635.10px;font-size:11.3px;line-height:13.56px;font-family:'Liberation Sans', sans-serif;color:#111;font-weight:normal;font-style:normal;transform:scaleX(1.04);transform-origin:0 0;">PDF previewer</div>
<div class="b" style="left:774px;top:629px;width:236px;height:25px;box-sizing:border-box;border:1px solid #a9a7a4;border-radius:2.5px;background:#fff"></div><div class="b" style="left:775px;top:630px;width:231px;height:23px;overflow:hidden"><div class="t u" style="left:4px;top:5.20px;font-size:11.3px;line-height:13.56px;font-family:'Liberation Sans', sans-serif;color:#111;font-weight:normal;font-style:normal;transform:scaleX(1.136);transform-origin:0 0;">atril &quot;%f&quot;</div></div>
<div class="b" style="left:609px;top:660px;width:405px;height:1px;background:#cac8c5"></div>
<div class="b" style="left:869px;top:665px;width:68px;height:27px;box-sizing:border-box;border:1px solid #aaa8a5;border-radius:3px;background:linear-gradient(#fafaf9,#e8e7e5)"></div>
<svg class="b" style="left:877px;top:671px" width="14" height="14"><path d="M4.4 0.8H9.6L13.2 4.4V9.6L9.6 13.2H4.4L0.8 9.6V4.4Z" fill="#aab8b8"/><circle cx="7" cy="7" r="5" fill="#e30000"/><circle cx="6.2" cy="5.6" r="2" fill="#ff3a3a" opacity="0.6"/></svg>
<div class="t u" style="left:892.8px;top:672.30px;font-size:11.3px;line-height:13.56px;font-family:'Liberation Sans', sans-serif;color:#111;font-weight:normal;font-style:normal;transform:scaleX(1.017);transform-origin:0 0;">Cancel</div>
<div class="b" style="left:942px;top:665px;width:67px;height:27px;box-sizing:border-box;border:2px solid #3d73c2;border-radius:3.5px;background:linear-gradient(#fafaf9,#e8e7e5)"></div>
<svg class="b" style="left:957px;top:669px" width="19" height="17"><path d="M10.5 1.5H16.5V10.5H7.5V14L1.2 8.8L7.5 3.6V7H12.5V1.5Z" fill="#b4cdef" stroke="#4b7dc2" stroke-width="1.1" stroke-linejoin="round"/></svg>
<div class="t u" style="left:976px;top:672.30px;font-size:11.3px;line-height:13.56px;font-family:'Liberation Sans', sans-serif;color:#111;font-weight:normal;font-style:normal;transform:scaleX(0.975);transform-origin:0 0;">OK</div>
<div class="b" style="left:609px;top:697px;width:405px;height:1px;background:#6c6c6c"></div>
<div class="b" style="left:609px;top:698px;width:405px;height:3px;background:#fbfbfb"></div>
<div class="b" style="left:629px;top:697px;width:1px;height:4px;background:#6c6c6c"></div>
<div class="b" style="left:993px;top:697px;width:1px;height:4px;background:#6c6c6c"></div>
<svg class="b" style="left:1226px;top:426px" width="22" height="28"><circle cx="12.5" cy="13.5" r="9.3" fill="#a68db6"/><rect x="8" y="8.5" width="9" height="10.5" rx="1.5" fill="#93b5cd"/><rect x="9.5" y="7" width="6" height="3" rx="1" fill="#93b5cd"/><circle cx="12.5" cy="13.7" r="2.6" fill="none" stroke="#a68db6" stroke-width="1.5"/></svg>
<svg class="b" style="left:1226px;top:255px" width="22" height="170"><text x="0" y="0" transform="translate(16.8,168) rotate(-90)" font-family="Liberation Sans" font-weight="bold" font-size="14.5" fill="#8897a6" textLength="163" lengthAdjust="spacingAndGlyphs">screenshots.debian.net</text></svg>
<div class="b" style="left:0px;top:701px;width:1248px;height:1px;background:#000"></div>
</body></html>
